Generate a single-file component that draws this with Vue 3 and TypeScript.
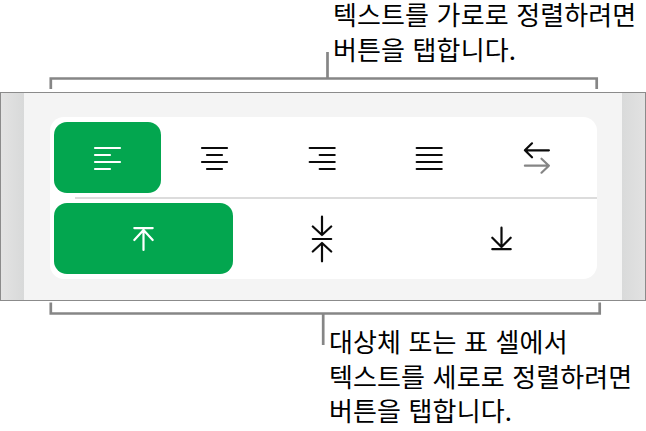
<template>
  <div class="figure">
    <div class="callout top">
      <p class="caption">텍스트를 가로로 정렬하려면<br />버튼을 탭합니다.</p>
      <svg class="bracket" width="646" height="40" viewBox="0 52 646 40">
        <path d="M50.8 89V78.5H596.7V89M327.5 52V78" />
      </svg>
    </div>

    <div class="panel">
      <div class="edge left"></div>
      <div class="sheet">
        <div class="card">
          <div class="row">
            <button
              v-for="b in horizontal"
              :key="b.id"
              class="btn"
              :class="{ active: hAlign === b.id }"
              :aria-label="b.label"
              @click="hAlign = b.id"
            >
              <svg width="48" height="48" viewBox="-23.5 -24 48 48">
                <path :d="b.path" />
                <path v-if="b.muted" class="muted" :d="b.muted" />
              </svg>
            </button>
          </div>
          <div class="divider"></div>
          <div class="row">
            <button
              v-for="b in vertical"
              :key="b.id"
              class="btn"
              :class="{ active: vAlign === b.id }"
              :aria-label="b.label"
              @click="vAlign = b.id"
            >
              <svg width="48" height="48" viewBox="-23.5 -24 48 48">
                <path :d="b.path" />
              </svg>
            </button>
          </div>
        </div>
      </div>
      <div class="edge right"></div>
    </div>

    <div class="callout bottom">
      <svg class="bracket" width="646" height="45" viewBox="0 301 646 45">
        <path d="M50.8 302.5V313.5H599.7V302.5M323.2 314V345" />
      </svg>
      <p class="caption">대상체 또는 표 셀에서<br />텍스트를 세로로 정렬하려면<br />버튼을 탭합니다.</p>
    </div>
  </div>
</template>

<script setup lang="ts">
import { ref } from 'vue'

interface AlignButton {
  id: string
  label: string
  path: string
  muted?: string
}

const hAlign = ref('left')
const vAlign = ref('top')

const horizontal: AlignButton[] = [
  { id: 'left', label: '왼쪽 정렬', path: 'M-12.5-10H12.5M-12.5-3H2.5M-12.5 4H12.5M-12.5 11H2.5' },
  { id: 'center', label: '가운데 정렬', path: 'M-12.5-10H12.5M-7.5-3H7.5M-12.5 4H12.5M-7.5 11H7.5' },
  { id: 'right', label: '오른쪽 정렬', path: 'M-12.8-10H12.2M-2.8-3H12.2M-12.8 4H12.2M-2.8 11H12.2' },
  { id: 'justify', label: '양쪽 정렬', path: 'M-12.8-10H12.2M-12.8-3H12.2M-12.8 4H12.2M-12.8 11H12.2' },
  {
    id: 'direction',
    label: '텍스트 방향',
    path: 'M12.4-7.7H-11.6M-4.5-14.7L-11.6-7.7L-4.5-.7',
    muted: 'M-11.6 7.7H12.4M5 .7L12.4 7.7L5 14.7',
  },
]

const vertical: AlignButton[] = [
  { id: 'top', label: '상단', path: 'M-9.2-10.9H9.2M0 10.9V-9M-9.2 1L0-9L9.2 1' },
  {
    id: 'middle',
    label: '중간',
    path: 'M-9.7 0H8.7M-.5-22.3V-4M-9.7-12.5L-.5-4L8.7-12.5M-.5 22.3V4M-9.7 12.5L-.5 4L8.7 12.5',
  },
  { id: 'bottom', label: '하단', path: 'M-9.2 10.2H9.2M0-11.3V8M-9.2-1.3L0 8L9.2-1.3' },
]
</script>

<style>
body { margin: 0; background: #fff; }
</style>

<style scoped>
.figure { width: 646px; height: 431px; display: flex; flex-direction: column; font-family: "Noto Sans CJK KR", sans-serif; }
.callout { position: relative; box-sizing: border-box; }
.callout.top { height: 92px; padding: 0 0 0 333px; }
.callout.bottom { height: 130px; padding: 23px 0 0 329px; }
.caption { margin: 0; font-size: 26px; line-height: 34.6px; letter-spacing: 0.12px; word-spacing: 1.5px; white-space: nowrap; color: #000; }
.top .caption { margin-top: -3px; }
.bracket { position: absolute; left: 0; fill: none; stroke: #868686; stroke-width: 2.7; }
.top .bracket { bottom: 0; }
.bottom .bracket { top: 0; }

.panel { display: flex; box-sizing: border-box; height: 209px; border: 1px solid #8b8b8b; flex: none; }
.edge { width: 23px; }
.edge.left { background: linear-gradient(90deg, #e3e3e3, #d8d9d9); }
.edge.right { background: linear-gradient(90deg, #d9dada, #e2e2e2); }
.sheet { flex: 1; padding: 24px 25px 0 26px; background: #f4f4f4; }
.card { box-sizing: border-box; height: 162px; padding: 5px 6px 5px 4px; border-radius: 14px; background: #fff; }
.row { display: flex; height: 71px; }
.btn { flex: 1; display: flex; align-items: center; justify-content: center; padding: 0; border: 0; border-radius: 13px; background: none; }
.btn svg { fill: none; stroke: #0b0b0b; stroke-width: 2.2; stroke-linecap: round; stroke-linejoin: round; }
.btn .muted { stroke: #858585; }
.btn.active { background: #03a64f; }
.btn.active svg { stroke: #fff; }
.divider { height: 2px; margin: 4px -6px 4px 21px; background: #dcdcdc; }
</style>
